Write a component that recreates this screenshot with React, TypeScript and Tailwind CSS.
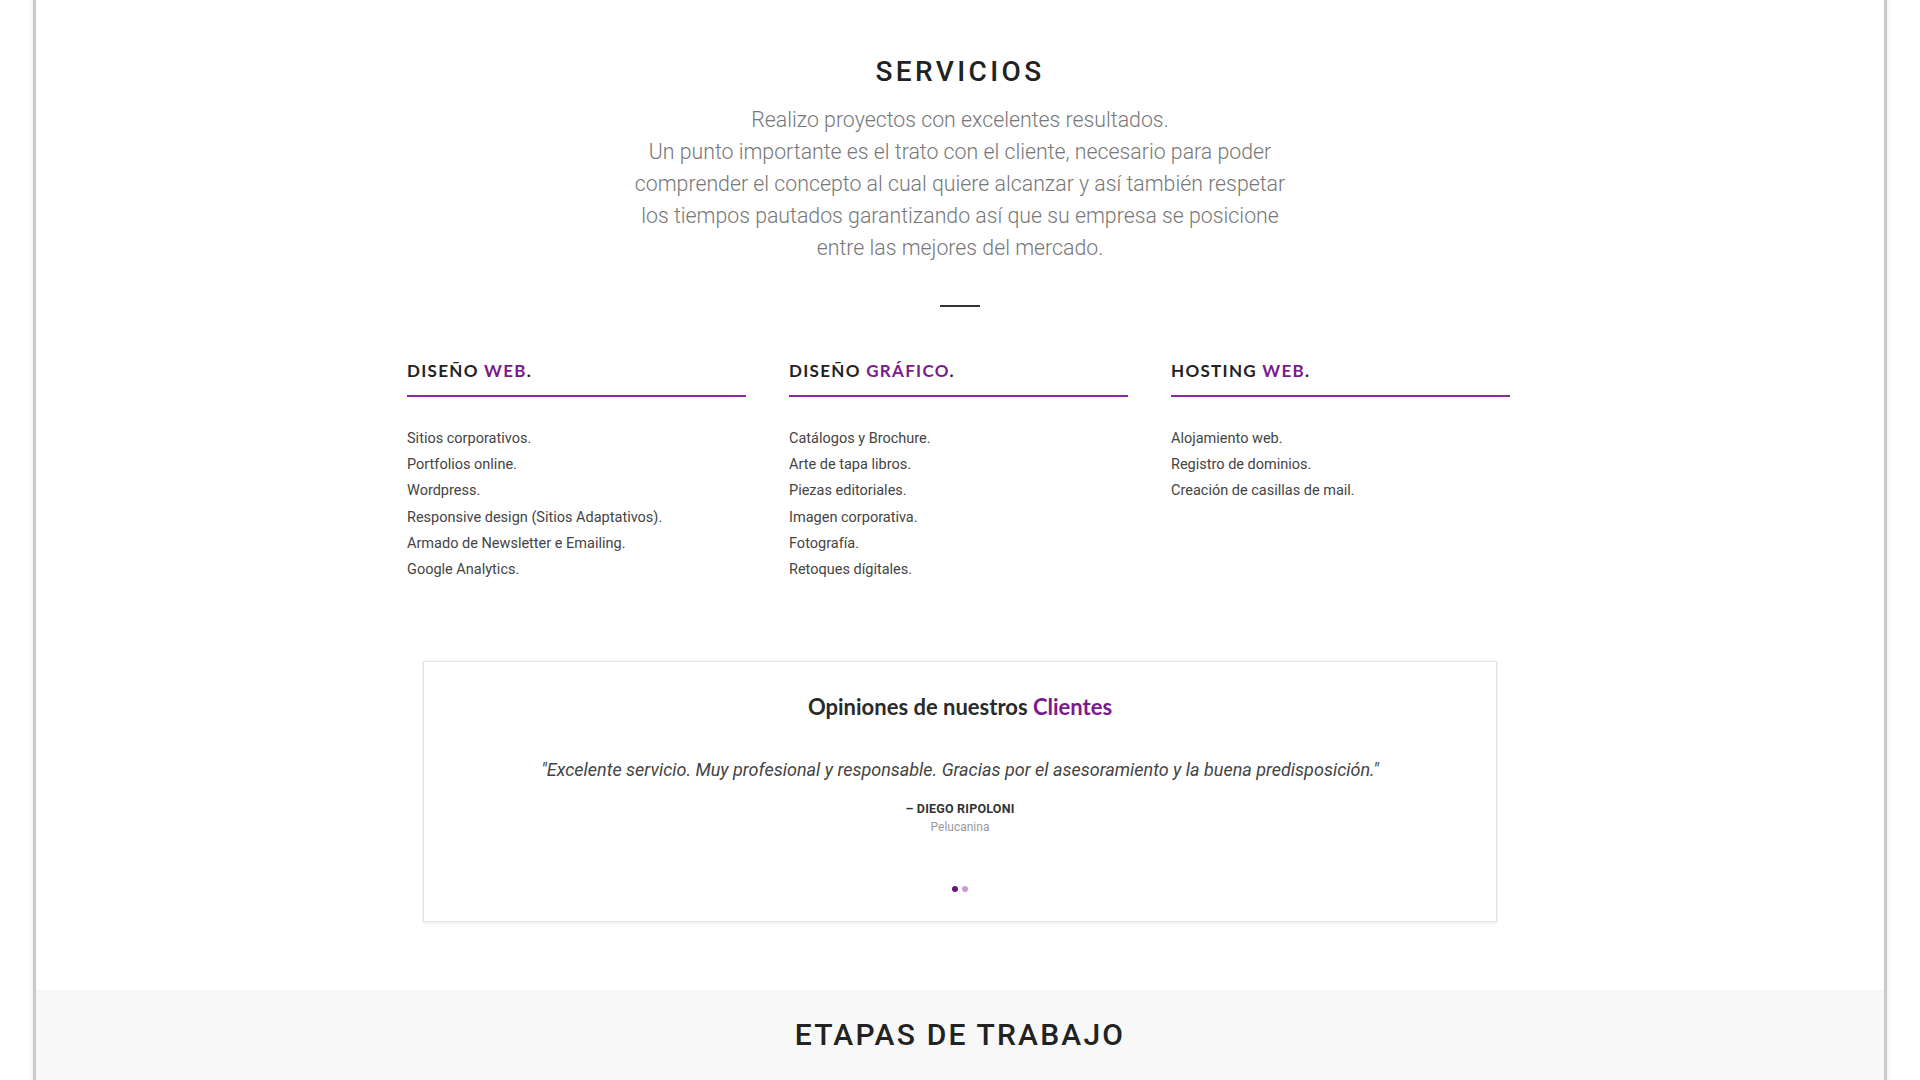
import React from "react";

const services = [
  {
    first: "DISEÑO",
    accent: "WEB",
    items: [
      "Sitios corporativos.",
      "Portfolios online.",
      "Wordpress.",
      "Responsive design (Sitios Adaptativos).",
      "Armado de Newsletter e Emailing.",
      "Google Analytics.",
    ],
  },
  {
    first: "DISEÑO",
    accent: "GRÁFICO",
    items: [
      "Catálogos y Brochure.",
      "Arte de tapa libros.",
      "Piezas editoriales.",
      "Imagen corporativa.",
      "Fotografía.",
      "Retoques dígitales.",
    ],
  },
  {
    first: "HOSTING",
    accent: "WEB",
    items: ["Alojamiento web.", "Registro de dominios.", "Creación de casillas de mail."],
  },
];

const intro = [
  "Realizo proyectos con excelentes resultados.",
  "Un punto importante es el trato con el cliente, necesario para poder",
  "comprender el concepto al cual quiere alcanzar y así también respetar",
  "los tiempos pautados garantizando así que su empresa se posicione",
  "entre las mejores del mercado.",
];

function ServiceColumn({ first, accent, items }: { first: string; accent: string; items: string[] }) {
  return (
    <div>
      <h3 className="font-['Lato',sans-serif] font-bold text-[17px] leading-[24px] tracking-[1.3px] text-[#222] pb-[12px] border-b-2 border-[#8b2a9f]">
        {first} <span className="text-[#7a1a8d]">{accent}</span>.
      </h3>
      <ul className="mt-[29px] font-['Roboto',sans-serif] text-[14.5px] leading-[26.2px] text-[#444]">
        {items.map((item, i) => (
          <li key={i}>{item}</li>
        ))}
      </ul>
    </div>
  );
}

export default function App() {
  return (
    <div className="min-h-screen bg-white">
      <div className="mx-[33px] border-x-[3px] border-[#cacaca] bg-white shadow-[0_0_5px_rgba(0,0,0,0.12)]">
        <section className="pt-[55px] pb-[68px] flex flex-col items-center">
          <h2 className="font-['Roboto',sans-serif] font-medium text-[28px] leading-[34px] tracking-[3.4px] text-[#222]">
            SERVICIOS
          </h2>
          <p className="mt-[15px] font-['Roboto',sans-serif] font-light text-[21.3px] leading-[32px] text-[#777] text-center">
            {intro.map((line, i) => (
              <span key={i} className="block">
                {line}
              </span>
            ))}
          </p>
          <div className="mt-[41px] w-[40px] h-[2px] bg-[#333]" />

          <div className="mt-[52px] mr-[3px] grid grid-cols-[339px_339px_339px] gap-x-[43px]">
            {services.map((s, i) => (
              <ServiceColumn key={i} {...s} />
            ))}
          </div>

          <div className="mt-[78px] w-[1074px] border border-[#e4e4e4] shadow-[0_1px_3px_rgba(0,0,0,0.1)] bg-white pt-[30px] pb-[29px] flex flex-col items-center">
            <h3 className="font-['Lato',sans-serif] font-bold text-[22px] leading-[30px] text-[#2a2a2a]">
              Opiniones de nuestros <span className="text-[#7a1a8d]">Clientes</span>
            </h3>
            <p className="mt-[34px] font-['Roboto',sans-serif] italic text-[18px] leading-[28px] text-[#444]">
              "Excelente servicio. Muy profesional y responsable. Gracias por el asesoramiento y la buena predisposición."
            </p>
            <p className="mt-[17px] font-['Roboto',sans-serif] font-bold text-[12.5px] leading-[16px] tracking-[0.2px] text-[#333]">
              – DIEGO RIPOLONI
            </p>
            <p className="mt-[2px] font-['Roboto',sans-serif] text-[12px] leading-[16px] text-[#999]">Pelucanina</p>
            <div className="mt-[51px] flex gap-[4px]">
              <span className="w-[6px] h-[6px] rounded-full bg-[#6a1580]" />
              <span className="w-[6px] h-[6px] rounded-full bg-[#c99bd4]" />
            </div>
          </div>
        </section>

        <section className="bg-[#f8f8f8] pt-[27px] pb-[60px] flex flex-col items-center">
          <h2 className="font-['Roboto',sans-serif] font-medium text-[30px] leading-[36px] tracking-[2.2px] text-[#222]">
            ETAPAS DE TRABAJO
          </h2>
        </section>
      </div>
    </div>
  );
}
